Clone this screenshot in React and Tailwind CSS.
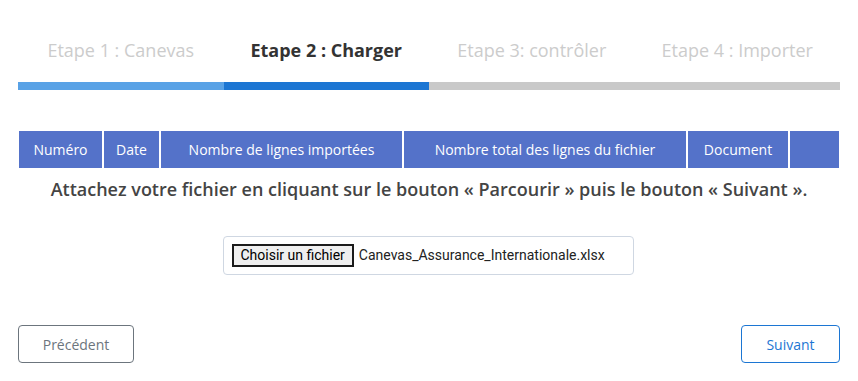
export default function App() {
  const steps = [
    { label: "Etape 1 : Canevas", active: false },
    { label: "Etape 2 : Charger", active: true },
    { label: "Etape 3: contrôler", active: false },
    { label: "Etape 4 : Importer", active: false },
  ];

  const cols = [
    { label: "Numéro", w: "w-[84px]" },
    { label: "Date", w: "w-[57px]" },
    { label: "Nombre de lignes importées", w: "w-[243px]" },
    { label: "Nombre total des lignes du fichier", w: "w-[284px]" },
    { label: "Document", w: "w-[102px]" },
    { label: "", w: "" },
  ];

  return (
    <div className="w-[858px] h-[381px] bg-white px-[18px] font-['Open_Sans',sans-serif]">
      {/* stepper */}
      <div className="grid grid-cols-4 pt-[38px] h-[62px]">
        {steps.map((s) => (
          <div
            key={s.label}
            className={
              "text-center text-[18px] leading-[24px] " +
              (s.active ? "font-bold text-[#333333]" : "text-[#cccccc]")
            }
          >
            {s.label}
          </div>
        ))}
      </div>
      <div className="mt-[20px] flex h-[8px] bg-[#c9c9c9]">
        <div className="w-1/4 bg-[#59a2e6]"></div>
        <div className="w-1/4 bg-[#1c76d3]"></div>
      </div>

      {/* table */}
      <div className="mt-[41px] pl-px pr-px">
        <table className="w-full border-collapse text-[14px] text-white">
          <thead>
            <tr className="bg-[#5472c9] h-[37px]">
              {cols.map((c, i) => (
                <th
                  key={i}
                  className={
                    c.w +
                    " font-normal text-center border-x-2 border-white first:border-l-0 last:border-r-0"
                  }
                >
                  {c.label}
                </th>
              ))}
            </tr>
          </thead>
        </table>
      </div>

      <p className="mt-[9px] text-center text-[18px] leading-[24px] font-semibold text-[#444444]">
        Attachez votre fichier en cliquant sur le bouton « Parcourir » puis le bouton « Suivant ».
      </p>

      {/* file chooser */}
      <div className="mt-[35px] flex justify-center">
        <div className="ml-[-2px] w-[411px] h-[39px] rounded-[4px] border border-[#cfd7e2] flex items-center pl-[8px] font-['Roboto',sans-serif] text-[14px] text-[#222222]">
          <span className="h-[23px] px-[7px] border-2 border-[#1b1b1b] bg-[#efefef] leading-[19px] text-black">
            Choisir un fichier
          </span>
          <span className="ml-[5px]">Canevas_Assurance_Internationale.xlsx</span>
        </div>
      </div>

      {/* nav buttons */}
      <div className="mt-[50px] flex justify-between">
        <button className="w-[116px] h-[38px] rounded-[4px] border border-[#6c757d] text-[14px] text-[#6c757d]">
          Précédent
        </button>
        <button className="w-[99px] h-[38px] rounded-[4px] border border-[#1c76d3] text-[14px] text-[#1c76d3]">
          Suivant
        </button>
      </div>
    </div>
  );
}
